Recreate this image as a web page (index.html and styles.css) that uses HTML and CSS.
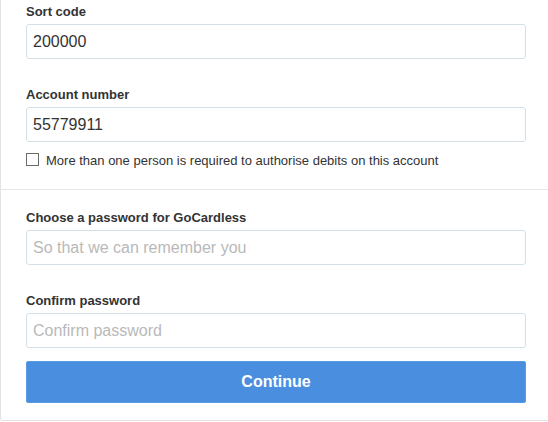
FILE: index.html
```html
<!DOCTYPE html>
<html lang="en">
<head>
<meta charset="utf-8">
<title>Bank details</title>
<link rel="stylesheet" href="styles.css">
</head>
<body>
<div class="card">
  <section class="section section-bank">
    <div class="field">
      <label class="label" for="sort">Sort code</label>
      <input class="input" id="sort" type="text" value="200000">
    </div>
    <div class="field field-tight">
      <label class="label" for="acc">Account number</label>
      <input class="input" id="acc" type="text" value="55779911">
    </div>
    <label class="check">
      <span class="box"></span>
      <span class="check-text">More than one person is required to authorise debits on this account</span>
    </label>
  </section>
  <section class="section section-pass">
    <div class="field">
      <label class="label" for="pw">Choose a password for GoCardless</label>
      <input class="input" id="pw" type="password" placeholder="So that we can remember you">
    </div>
    <div class="field field-last">
      <label class="label" for="pw2">Confirm password</label>
      <input class="input" id="pw2" type="password" placeholder="Confirm password">
    </div>
    <button class="btn" type="button">Continue</button>
  </section>
</div>
</body>
</html>
```
FILE: styles.css
```css
html, body {
  margin: 0;
  padding: 0;
  overflow: hidden;
  background: #ffffff;
}
body {
  font-family: "Liberation Sans", Arial, sans-serif;
  color: #333333;
}
.card {
  width: 550px;
  height: 421px;
  box-sizing: border-box;
  border-left: 1px solid #e3e3e3;
  border-right: 1px solid #e3e3e3;
  border-bottom: 1px solid #e3e3e3;
  border-radius: 0 0 3px 3px;
}
.section {
  padding: 0 25px;
  display: flex;
  flex-direction: column;
}
.section-bank {
  padding-top: 3px;
  height: 190px;
  box-sizing: border-box;
  border-bottom: 1px solid #e6e6e6;
}
.section-pass {
  padding-top: 19px;
}
.field {
  display: flex;
  flex-direction: column;
  margin-bottom: 27px;
}
.field-tight {
  margin-bottom: 0;
}
.field-last {
  margin-bottom: 13px;
}
.label {
  font-size: 13px;
  font-weight: bold;
  line-height: 18px;
  margin-bottom: 3px;
  color: #333333;
}
.input {
  width: 500px;
  height: 35px;
  box-sizing: border-box;
  border: 1px solid #d5e0e6;
  border-radius: 3px;
  padding: 0 6px;
  font-family: "Liberation Sans", Arial, sans-serif;
  font-size: 16px;
  color: #333333;
  background: #ffffff;
  outline: none;
}
.input::placeholder {
  color: #b9b9b9;
}
.check {
  display: flex;
  align-items: flex-start;
  margin-top: 11px;
}
.box {
  width: 11px;
  height: 11px;
  border: 1px solid #6b6b6b;
  background: #ffffff;
  flex: none;
}
.check-text {
  font-size: 13px;
  line-height: 16px;
  margin-left: 7px;
  color: #333333;
}
.btn {
  width: 500px;
  height: 42px;
  border: 1px solid #5a9be6;
  border-radius: 2px;
  background: #4a8ee0;
  color: #ffffff;
  font-family: "Liberation Sans", Arial, sans-serif;
  font-size: 16px;
  font-weight: bold;
  padding: 0;
}
```
